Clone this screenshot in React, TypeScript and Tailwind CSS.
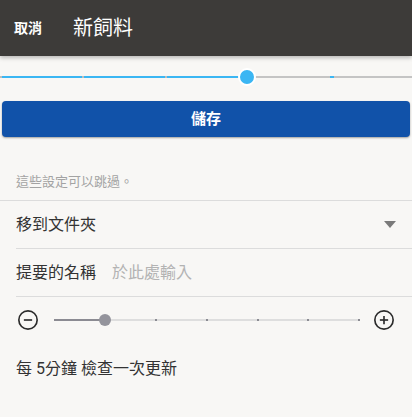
const FONT = "font-['Roboto','Noto_Sans_CJK_TC',sans-serif]"

function CircleIcon({ plus }: { plus?: boolean }) {
  return (
    <svg width="22" height="22" viewBox="0 0 24 24" fill="none" stroke="#2b2b2b" strokeWidth="1.8">
      <circle cx="12" cy="12" r="10" />
      <line x1="7.5" y1="12" x2="16.5" y2="12" />
      {plus && <line x1="12" y1="7.5" x2="12" y2="16.5" />}
    </svg>
  )
}

function StepBar() {
  return (
    <div className="relative h-[18px] px-[1px]">
      <div className="absolute inset-x-0 top-[8px] flex h-[2px] items-stretch">
        <div className="w-[2px] bg-[#bdbdbd]" />
        <div className="w-[80px] bg-[#3bb6f3]" />
        <div className="w-[2px] bg-[#bdbdbd]" />
        <div className="w-[81px] bg-[#3bb6f3]" />
        <div className="w-[2px] bg-[#bdbdbd]" />
        <div className="w-[80px] bg-[#3bb6f3]" />
        <div className="w-[83px] bg-[#c4c4c4]" />
        <div className="w-[4px] bg-[#3bb6f3]" />
        <div className="flex-1 bg-[#c4c4c4]" />
      </div>
      <div className="absolute left-[238px] top-0 h-[18px] w-[18px] rounded-full border-[2px] border-white bg-[#3bb6f3]" />
    </div>
  )
}

function Slider() {
  const ticks = [0, 1, 2, 3, 4]
  return (
    <div className="flex items-center px-[17px] py-[12px]">
      <CircleIcon />
      <div className="relative ml-[15px] mr-[13px] h-[14px] flex-1">
        <div className="absolute inset-x-0 top-[6px] h-[2px] bg-[#dedede]" />
        <div className="absolute left-0 top-[6px] h-[2px] w-[51px] bg-[#8b8b92]" />
        {ticks.map((t) => (
          <div
            key={t}
            className="absolute top-[6px] h-[2px] w-[2px] bg-[#8b8b92]"
            style={{ left: `${101 + t * 50.8}px` }}
          />
        ))}
        <div className="absolute left-[45px] top-[1px] h-[12px] w-[12px] rounded-full bg-[#94949c]" />
      </div>
      <CircleIcon plus />
    </div>
  )
}

export default function App() {
  return (
    <div className={`h-[417px] w-[412px] overflow-hidden bg-[#f8f7f5] ${FONT}`}>
      <header className="relative z-10 flex h-[56px] items-center bg-[#3d3b39] shadow-[0_2px_4px_rgba(0,0,0,0.25)]">
        <button className="ml-[14px] text-[14px] font-bold text-white">取消</button>
        <h1 className="ml-[31px] text-[20px] text-white">新飼料</h1>
      </header>

      <div className="mt-[12px]">
        <StepBar />
      </div>

      <div className="mt-[15px] px-[2px]">
        <button className="h-[36px] w-full rounded-[4px] bg-[#1152a9] text-[15px] font-bold text-white shadow-[0_1px_2px_rgba(0,0,0,0.35)]">
          儲存
        </button>
      </div>

      <p className="mt-[35px] px-[16px] text-[13px] leading-[20px] text-[#a3a3a3]">這些設定可以跳過。</p>

      <div className="mt-[8px] border-t border-[#dcdcdc]" />

      <div className="ml-[16px]">
        <div className="flex h-[48px] items-center justify-between border-b border-[#dcdcdc] pr-[16px]">
          <span className="text-[16px] text-[#333]">移到文件夾</span>
          <svg width="12" height="7" viewBox="0 0 12 7">
            <path d="M0 0h12L6 7z" fill="#7a7a7a" />
          </svg>
        </div>
        <div className="flex h-[48px] items-center gap-[16px] border-b border-[#dcdcdc]">
          <span className="text-[16px] text-[#333]">提要的名稱</span>
          <span className="text-[16px] text-[#b3b3b3]">於此處輸入</span>
        </div>
      </div>

      <Slider />

      <p className="mt-[14px] px-[16px] text-[16px] leading-[24px] text-[#333]">每 5分鐘 檢查一次更新</p>
    </div>
  )
}
